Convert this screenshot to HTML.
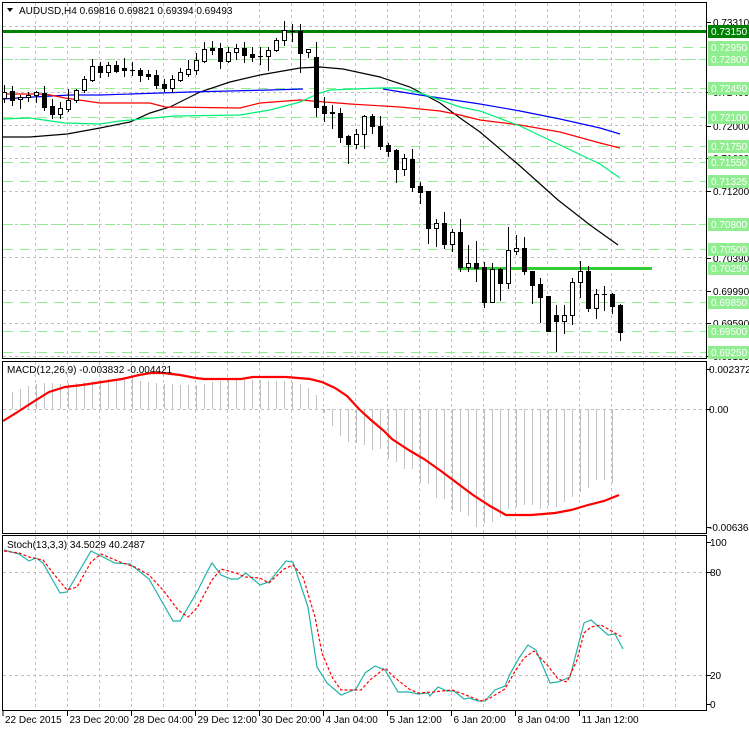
<!DOCTYPE html>
<html><head><meta charset="utf-8">
<style>
html,body{margin:0;padding:0;background:#fff;width:749px;height:731px;overflow:hidden}
svg{display:block}
text{font-family:"Liberation Sans",sans-serif;font-size:10px;fill:#000}
</style></head>
<body>
<svg id="s" width="749" height="731" xmlns="http://www.w3.org/2000/svg" shape-rendering="crispEdges">
<rect width="749" height="731" fill="#fff"/>
<g id="grid"></g>
<g id="levels"></g>
<g id="mas" shape-rendering="auto" fill="none" stroke-width="1.2">
<polyline stroke="#000" points="3,137 30,137 67,134 100,128 130,122 150,113 170,107 200,92 230,82 260,75 300,68 320,67 343,69 380,77 410,87 440,103 460,118 480,132 520,166 558,200 590,225 618,245"/>
<polyline stroke="#0000ff" points="3,99 33,97 70,95 100,95 190,92 270,90 303,89"/>
<polyline stroke="#0000ff" points="383,89 420,95 460,101 480,104 520,111 560,119 600,128 620,134"/>
<polyline stroke="#ff0000" points="3,94 45,94 65,98 100,103 150,103 165,107 240,108 260,103 300,100 350,104 400,107 440,111 460,115 480,120 520,125 560,132 600,143 620,148"/>
<polyline stroke="#00ee77" points="3,119 30,118 65,123 100,124 120,121 175,116 240,115 270,110 300,102 320,93 330,90 380,88 400,88 420,93 440,100 460,107 480,111 520,126 560,145 600,164 620,178"/>
</g>
<g id="candles"></g>
<g id="macd"></g>
<g shape-rendering="auto" fill="none">
<polyline stroke="#ff0000" stroke-width="2.2" points="3,421 16,413 33,402 49,392 65,387 82,385 102,382 122,379 139,375 151,373 163,373 180,375 196,378 204,379 241,379 253,377 286,377 310,379 322,382 335,388 347,396 359,409 371,420 384,431 392,439 404,447 412,452 424,459 441,471 457,483 473,495 490,506 506,515 531,515 555,513 571,510 588,505 604,501 619,495"/>
</g>
<g id="stoch" shape-rendering="auto" fill="none">
<polyline stroke="#20b2aa" stroke-width="1.2" points="4,550 19,554 29,561 36,558 43,563 60,593 67,592 91,551 115,563 130,564 149,579 173,621 180,621 197,592 207,572 212,563 221,575 231,579 238,579 246,573 260,585 269,582 286,561 293,562 308,607 317,667 327,683 341,695 356,689 365,673 375,666 385,670 398,692 409,692 418,694 428,693 430,696 438,687 447,691 454,691 464,699 469,698 478,701 485,701 495,690 505,686 510,674 519,658 528,645 536,650 550,683 558,682 570,677 584,623 591,620 599,627 608,635 615,634 623,649"/>
<polyline stroke="#ff0000" stroke-width="1.2" stroke-dasharray="3,2" points="4,551 19,553 29,557 43,560 53,573 67,590 77,587 91,562 101,554 120,562 135,567 149,575 163,590 178,610 188,617 197,608 212,580 221,569 236,573 245,577 260,578 269,583 284,569 293,565 303,577 315,617 322,653 332,677 341,690 361,690 370,680 385,668 394,677 409,689 418,693 433,692 452,690 466,695 481,701 490,698 505,689 514,673 524,658 534,651 548,666 558,679 567,682 577,660 584,633 591,627 601,625 615,633 622,637"/>
</g>
<g id="frames" fill="none" stroke="#000" stroke-width="1">
<rect x="2.5" y="2.5" width="704" height="356"/>
<rect x="2.5" y="361.5" width="704" height="172"/>
<rect x="2.5" y="535.5" width="704" height="175"/>
</g>
<g id="axis"></g>
<g id="txt" shape-rendering="auto">
<polygon points="7,8 13,8 10,12" fill="#000"/>
<text x="19" y="14" font-size="10.5">AUDUSD,H4  0.69816 0.69821 0.69394 0.69493</text>
<text x="7" y="373">MACD(12,26,9) -0.003832 -0.004421</text>
<text x="7" y="548">Stoch(13,3,3) 34.5029 40.2487</text>
</g>
</svg>
<script>
(function(){
var NS="http://www.w3.org/2000/svg";
function el(p,t,a,txt){var e=document.createElementNS(NS,t);for(var k in a)e.setAttribute(k,a[k]);if(txt!=null)e.textContent=txt;document.getElementById(p).appendChild(e);return e;}
var G="#c0c0c0";
// vertical grid
for(var k=0;k<21;k++){var x=35.5+32*k;
 [[3,358],[362,533],[536,710]].forEach(function(r){el("grid","line",{x1:x,x2:x,y1:r[0],y2:r[1],stroke:G,"stroke-dasharray":"3,3"});});}
// horizontal main grid
[26,59,92,125,158,191,224,257,290,323,356].forEach(function(y){el("grid","line",{x1:3,x2:706,y1:y+.5,y2:y+.5,stroke:G,"stroke-dasharray":"3,3"});});
[409].forEach(function(y){el("grid","line",{x1:3,x2:706,y1:y+.5,y2:y+.5,stroke:G,"stroke-dasharray":"3,3"});});
[572,675].forEach(function(y){el("grid","line",{x1:3,x2:706,y1:y+.5,y2:y+.5,stroke:G,"stroke-dasharray":"3,3"});});
// green levels
var lv=[["0.72950",47],["0.72800",59],["0.72450",88],["0.72100",117],["0.71750",146],["0.71550",162],["0.71325",181],["0.70800",224],["0.70500",249],["0.69850",302],["0.69500",331],["0.69250",352]];
lv.forEach(function(l){el("levels","line",{x1:3,x2:706,y1:l[1]+.5,y2:l[1]+.5,stroke:"#90ee90","stroke-dasharray":"10,7"});});
el("levels","rect",{x:458,y:267,width:194,height:3,fill:"#32cd32"});
el("levels","rect",{x:3,y:30,width:703,height:3,fill:"#008000"});
// candles
var c=[[98,92,85,102],[91,100,86,105],[99,97,95,108],[97,95,92,101],[95,92,91,102],[93,107,86,110],[106,114,99,118],[114,108,102,118],[109,100,89,111],[100,90,89,102],[90,79,76,92],[80,66,59,81],[66,72,62,77],[72,65,62,76],[65,71,61,72],[68,70,58,76],[70,70,62,75],[70,75,68,81],[74,76,70,79],[75,85,70,88],[84,88,79,91],[88,79,75,92],[80,72,68,81],[74,69,60,76],[70,60,53,74],[61,49,42,62],[48,50,41,54],[48,61,43,68],[61,52,47,62],[52,48,44,59],[48,55,42,62],[54,57,47,61],[56,56,47,64],[56,50,47,70],[50,40,38,51],[40,30,21,45],[31,31,24,41],[31,53,24,72],[52,49,49,57],[57,107,42,116],[106,113,97,121],[112,113,105,128],[113,137,108,142],[136,144,135,163],[144,134,129,148],[134,116,115,148],[116,126,114,133],[126,146,116,149],[145,151,143,156],[150,169,149,182],[169,158,154,175],[159,187,149,191],[186,192,182,203],[191,228,191,243],[228,223,219,246],[223,244,212,248],[244,232,229,251],[232,267,219,271],[267,263,245,271],[263,268,241,281],[267,302,262,307],[302,269,263,302],[269,283,268,300],[283,250,227,288],[251,248,235,254],[248,271,237,274],[271,285,271,303],[284,297,278,322],[296,331,296,331],[315,321,305,351],[321,315,305,333],[315,282,278,324],[282,271,261,297],[271,308,266,311],[308,294,289,318],[294,294,286,310],[294,306,293,313],[305,332,304,340]];
c.forEach(function(d,i){var cx=4+8*i;var o=d[0],cl=d[1],h=d[2],l=d[3];
 el("candles","line",{x1:cx+.5,x2:cx+.5,y1:h,y2:l+1,stroke:"#000"});
 var t=Math.min(o,cl),b=Math.max(o,cl);
 if(b-t<1){el("candles","line",{x1:cx-2,x2:cx+3,y1:t+.5,y2:t+.5,stroke:"#000"});}
 else el("candles","rect",{x:cx-2+.5,y:t+.5,width:4,height:b-t,fill:cl<o?"#fff":"#000",stroke:"#000"});
});
// macd histogram
var m=[396,392,389,386,384,383,383,384,383,383,382,381,380,379,379,378,377,381,382,383,384,384,385,385,385,384,382,381,379,379,380,380,380,381,381,381,382,384,388,395,413,426,436,442,443,445,450,449,459,462,469,469,483,484,498,499,510,512,516,527,523,522,517,509,507,505,505,509,506,507,502,497,492,488,480,480,483];
m.forEach(function(v,i){var x=4.5+8*i;if(i==0)return;el("macd","line",{x1:x,x2:x,y1:409,y2:v,stroke:"#c0c0c0"});});
// axis labels
var ax=[["0.73310",22],["0.72400",92],["0.72000",126],["0.71600",158],["0.71200",191],["0.70390",258],["0.69990",291],["0.69590",323],["0.69190",356]];
ax.forEach(function(a){el("axis","line",{x1:707,x2:711,y1:a[1]+.5,y2:a[1]+.5,stroke:"#000"});el("axis","text",{x:713,y:a[1]+4},a[0]);});
lv.forEach(function(l){el("axis","rect",{x:708,y:l[1]-6,width:41,height:13,fill:"#90ee90"});el("axis","text",{x:711,y:l[1]+4,fill:"#fff",style:"fill:#fff"},l[0]);});
el("axis","rect",{x:708,y:25,width:41,height:13,fill:"#008000"});el("axis","text",{x:711,y:35,style:"fill:#fff"},"0.73150");
el("axis","rect",{x:708,y:262,width:41,height:13,fill:"#90ee90"});el("axis","text",{x:711,y:272,style:"fill:#fff"},"0.70250");
[["0.002372",369],["0.00",409],["-0.006364",527]].forEach(function(a){el("axis","line",{x1:707,x2:711,y1:a[1]+.5,y2:a[1]+.5,stroke:"#000"});el("axis","text",{x:709,y:a[1]+4},a[0]);});
[["100",542],["80",572],["20",675],["0",704]].forEach(function(a){el("axis","line",{x1:707,x2:711,y1:a[1]+.5,y2:a[1]+.5,stroke:"#000"});el("axis","text",{x:710,y:a[1]+4},a[0]);});
var dl=[["22 Dec 2015",3],["23 Dec 20:00",67.5],["28 Dec 04:00",131.5],["29 Dec 12:00",195.5],["30 Dec 20:00",259.5],["4 Jan 04:00",323.5],["5 Jan 12:00",387.5],["6 Jan 20:00",451.5],["8 Jan 04:00",515.5],["11 Jan 12:00",579.5]];
dl.forEach(function(d){el("axis","line",{x1:d[1],x2:d[1],y1:711,y2:716,stroke:"#000"});el("axis","text",{x:d[1]+2,y:723},d[0]);});
})();
</script>
</body></html>
